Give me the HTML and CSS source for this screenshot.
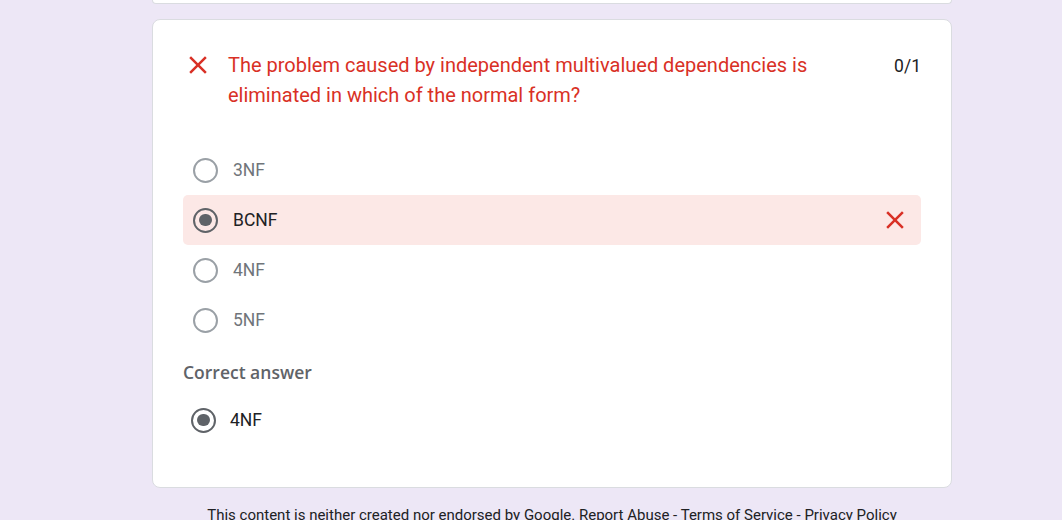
FILE: index.html
```html
<!DOCTYPE html>
<html lang="en">
<head>
<meta charset="utf-8">
<title>Quiz response</title>
<link rel="stylesheet" href="styles.css">
</head>
<body>
<div class="page">
  <div class="card-prev"></div>
  <div class="card">
    <div class="q-head">
      <svg class="x-icon" viewBox="0 0 24 24" width="30" height="30"><path d="M19 6.41L17.59 5 12 10.59 6.41 5 5 6.41 10.59 12 5 17.59 6.41 19 12 13.41 17.59 19 19 17.59 13.41 12z"/></svg>
      <div class="q-title">The problem caused by independent multivalued dependencies is eliminated in which of the normal form?</div>
      <div class="q-score">0/1</div>
    </div>
    <div class="options">
      <div class="opt"><span class="radio"></span><span class="opt-text">3NF</span></div>
      <div class="opt opt-wrong"><span class="radio radio-on"></span><span class="opt-text opt-sel">BCNF</span>
        <svg class="x-icon x-right" viewBox="0 0 24 24" width="30" height="30"><path d="M19 6.41L17.59 5 12 10.59 6.41 5 5 6.41 10.59 12 5 17.59 6.41 19 12 13.41 17.59 19 19 17.59 13.41 12z"/></svg>
      </div>
      <div class="opt"><span class="radio"></span><span class="opt-text">4NF</span></div>
      <div class="opt"><span class="radio"></span><span class="opt-text">5NF</span></div>
    </div>
    <div class="correct-label">Correct answer</div>
    <div class="opt opt-correct"><span class="radio radio-on"></span><span class="opt-text opt-sel">4NF</span></div>
  </div>
  <div class="footer">This content is neither created nor endorsed by Google. Report Abuse - Terms of Service - Privacy Policy</div>
</div>
</body>
</html>
```
FILE: styles.css
```css
html, body {
  margin: 0;
  padding: 0;
  background: #ede7f6;
  font-family: Roboto, "Liberation Sans", Arial, sans-serif;
  overflow: hidden;
}

.page {
  width: 800px;
  margin-left: 152px;
}

.card-prev {
  height: 3px;
  background: #fff;
  border: 1px solid #dadce0;
  border-top: none;
  border-radius: 0 0 8px 8px;
  margin-bottom: 15px;
}

.card {
  background: #fff;
  border: 1px solid #dadce0;
  border-radius: 8px;
  padding: 30px 30px 42px 30px;
}

.q-head {
  display: flex;
  align-items: flex-start;
}

.x-icon {
  fill: #d93025;
  flex: none;
}

.q-head .x-icon {
  margin-right: 15px;
}

.q-title {
  flex: 1;
  font-size: 20px;
  line-height: 30px;
  color: #d93025;
  padding-right: 16px;
}

.q-score {
  font-size: 17.5px;
  line-height: 30px;
  color: #202124;
  padding-top: 1px;
}

.options {
  margin-top: 35px;
}

.opt {
  display: flex;
  align-items: center;
  height: 50px;
  padding-left: 10px;
  border-radius: 5px;
}

.opt-wrong {
  background: #fce8e6;
  padding-right: 11px;
}

.x-right {
  margin-left: auto;
}

.radio {
  box-sizing: border-box;
  width: 25px;
  height: 25px;
  border: 2.5px solid #9aa0a6;
  border-radius: 50%;
  display: flex;
  align-items: center;
  justify-content: center;
  flex: none;
}

.radio-on {
  border-color: #5f6368;
}

.radio-on::after {
  content: "";
  width: 12.5px;
  height: 12.5px;
  border-radius: 50%;
  background: #5f6368;
}

.opt-text {
  margin-left: 15px;
  font-size: 17.5px;
  color: #70757a;
}

.opt-sel {
  color: #202124;
}

.correct-label {
  margin-top: 15px;
  font-family: "Open Sans", Roboto, sans-serif;
  font-size: 17.5px;
  line-height: 24px;
  font-weight: 600;
  color: #5f6368;
  margin-bottom: 11px;
}

.opt-correct {
  padding-left: 8px;
}

.opt-correct .opt-text {
  margin-left: 14px;
}

.footer {
  margin-top: 17px;
  text-align: center;
  font-size: 15px;
  line-height: 20px;
  color: #202124;
}
```
